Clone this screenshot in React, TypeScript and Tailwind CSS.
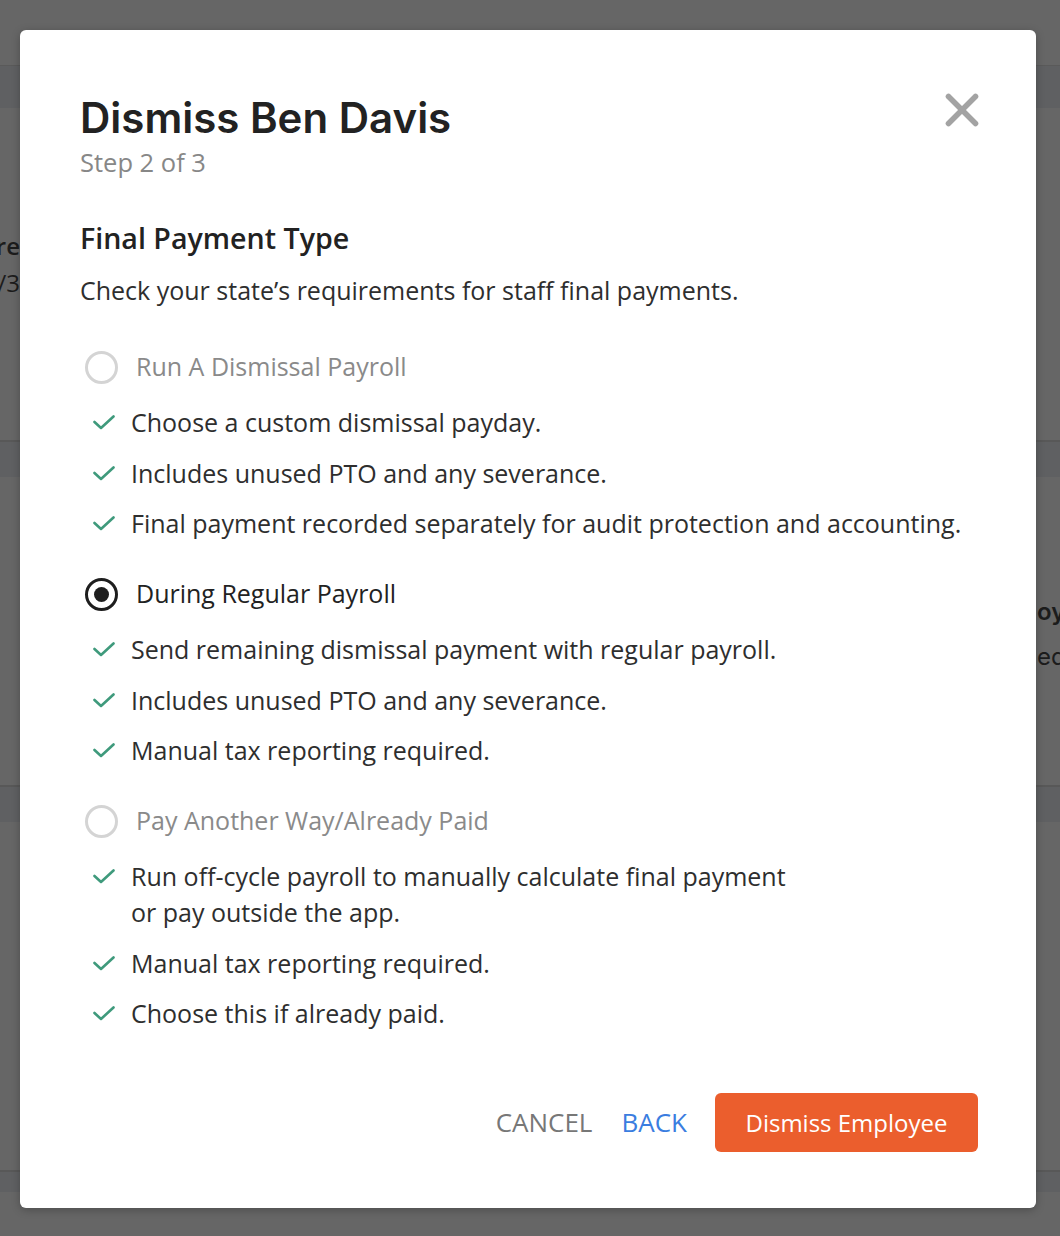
import React from "react"

const sections = [
  {
    label: "Run A Dismissal Payroll",
    selected: false,
    items: [
      ["Choose a custom dismissal payday."],
      ["Includes unused PTO and any severance."],
      ["Final payment recorded separately for audit protection and accounting."],
    ],
  },
  {
    label: "During Regular Payroll",
    selected: true,
    items: [
      ["Send remaining dismissal payment with regular payroll."],
      ["Includes unused PTO and any severance."],
      ["Manual tax reporting required."],
    ],
  },
  {
    label: "Pay Another Way/Already Paid",
    selected: false,
    items: [
      ["Run off-cycle payroll to manually calculate final payment", "or pay outside the app."],
      ["Manual tax reporting required."],
      ["Choose this if already paid."],
    ],
  },
]

function Check() {
  return (
    <svg width="22" height="15" viewBox="0 0 22 15" className="shrink-0 mt-[11px]">
      <polyline points="1.5,7 8,13 20.5,1.5" fill="none" stroke="#3f9a7c" strokeWidth="2.6" strokeLinecap="round" strokeLinejoin="round" />
    </svg>
  )
}

function Radio({ selected }: { selected: boolean }) {
  if (selected) {
    return (
      <div className="w-[33px] h-[33px] rounded-full border-[3px] border-[#1e1e1e] flex items-center justify-center shrink-0">
        <div className="w-[15px] h-[15px] rounded-full bg-[#1e1e1e]" />
      </div>
    )
  }
  return <div className="w-[33px] h-[33px] rounded-full border-[3px] border-[#d4d4d4] shrink-0" />
}

function Background() {
  return (
    <div className="h-[1236px] w-full bg-[#666666] flex flex-col font-['Open_Sans',sans-serif]">
      <div className="h-[65px]" />
      <div className="h-[43px] bg-[#5f6062] border-t border-[#5a5a5a]" />
      <div className="h-[332px] flex">
        <div className="w-[20px] overflow-hidden flex flex-col items-end pt-[119px] text-[#1c1c1c] text-[24px] leading-[37px]">
          <div className="whitespace-nowrap font-semibold">re</div>
          <div className="whitespace-nowrap">/3</div>
        </div>
      </div>
      <div className="h-[37px] bg-[#5f6062] border-t-2 border-[#585858]" />
      <div className="h-[308px] flex justify-end">
        <div className="w-[23px] overflow-hidden flex flex-col pt-[112px] text-[#1c1c1c] text-[24px] leading-[45px]">
          <div className="whitespace-nowrap font-['Inter',sans-serif] font-semibold">oye</div>
          <div className="whitespace-nowrap font-['Inter',sans-serif]">ed,</div>
        </div>
      </div>
      <div className="h-[37px] bg-[#5f6062] border-t-2 border-[#585858]" />
      <div className="h-[348px]" />
      <div className="h-[22px] bg-[#5f6062] border-t-2 border-[#585858]" />
      <div className="flex-1" />
    </div>
  )
}

export default function App() {
  return (
    <div className="relative w-full h-[1236px] overflow-hidden">
      <Background />
      <div className="absolute inset-0 flex items-start justify-start pl-[20px] pt-[30px]">
        <div className="w-[1016px] h-[1178px] bg-white rounded-[6px] shadow-[0_2px_8px_rgba(0,0,0,0.25)] pl-[60px] pr-[58px] pt-[64px] font-['Open_Sans',sans-serif] flex flex-col">
          <div className="flex justify-between items-start">
            <div className="flex flex-col">
              <h1 className="font-['Inter',sans-serif] font-semibold text-[42px] leading-[48px] text-[#222222]">Dismiss Ben Davis</h1>
              <div className="mt-[4px] text-[25.5px] leading-[32px] text-[#878787]">Step 2 of 3</div>
            </div>
            <button className="mt-[-1px] mr-[-1px] p-0">
              <svg width="34" height="34" viewBox="0 0 34 34">
                <line x1="3.5" y1="3.5" x2="30.5" y2="30.5" stroke="#a3a3a3" strokeWidth="5.5" strokeLinecap="round" />
                <line x1="30.5" y1="3.5" x2="3.5" y2="30.5" stroke="#a3a3a3" strokeWidth="5.5" strokeLinecap="round" />
              </svg>
            </button>
          </div>

          <h2 className="mt-[42px] text-[28.6px] leading-[36px] font-semibold text-[#222222]">Final Payment Type</h2>
          <p className="mt-[16px] text-[25px] leading-[36px] text-[#2e2e2e]">Check your state’s requirements for staff final payments.</p>

          <div className="mt-[41px] flex flex-col gap-[35px]">
            {sections.map((s) => (
              <div key={s.label} className="flex flex-col">
                <div className="flex items-center h-[36px] pl-[5px] gap-[18px]">
                  <Radio selected={s.selected} />
                  <span className={s.selected ? "text-[25px] text-[#222222]" : "text-[25px] text-[#8a8a8a]"}>{s.label}</span>
                </div>
                <ul className="mt-[19px] flex flex-col gap-[14.5px]">
                  {s.items.map((lines, i) => (
                    <li key={i} className="flex items-start pl-[13px] gap-[16px]">
                      <Check />
                      <span className="text-[25px] leading-[36px] text-[#2e2e2e]">
                        {lines.map((l, j) => (
                          <React.Fragment key={j}>
                            {j > 0 && <br />}
                            {l}
                          </React.Fragment>
                        ))}
                      </span>
                    </li>
                  ))}
                </ul>
              </div>
            ))}
          </div>

          <div className="mt-[62px] flex items-center justify-end">
            <button className="text-[26px] text-[#777777] uppercase">Cancel</button>
            <button className="ml-[29px] text-[26px] text-[#3a7de0] uppercase">Back</button>
            <button className="ml-[28px] w-[263px] h-[59px] rounded-[6px] bg-[#eb5e2d] text-white text-[24px]">Dismiss Employee</button>
          </div>
        </div>
      </div>
    </div>
  )
}
